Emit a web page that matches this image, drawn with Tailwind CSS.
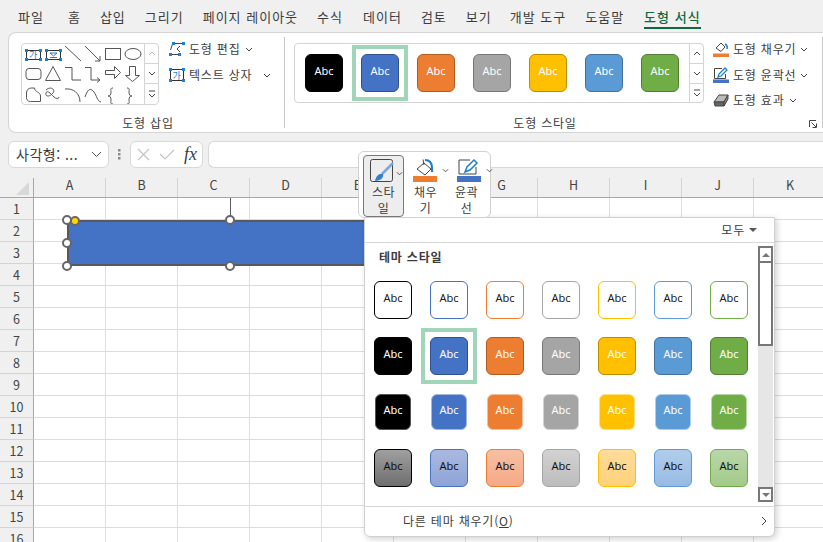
<!DOCTYPE html>
<html lang="ko">
<head>
  <meta charset="UTF-8">
  <title>도형 서식</title>
  <script src="https://cdn.jsdelivr.net/npm/@tailwindcss/browser@4"></script>
</head>
<body class="bg-[#f0f0f0]">
  <div class="relative flex h-[542px] w-[823px] flex-col overflow-hidden bg-[#f0f0f0] font-['Noto_Sans_CJK_KR',sans-serif] text-[#3c3c3c]">

    <!-- tabs -->
    <div class="flex h-[32px] shrink-0 items-start gap-[19px] pl-[18px] pt-[7px] text-[13px] leading-[20px] tracking-[1px]">
      <span>파일</span>
      <span class="ml-[5px]">홈</span>
      <span>삽입</span>
      <span>그리기</span>
      <span>페이지 레이아웃</span>
      <span>수식</span>
      <span class="ml-[1px]">데이터</span>
      <span>검토</span>
      <span>보기</span>
      <span class="-ml-[1px]">개발 도구</span>
      <span>도움말</span>
      <span class="relative ml-[1px] font-medium text-[#0e6a3c]">도형 서식<span class="absolute -bottom-[2px] left-0 right-0 h-[2px] bg-[#0e6a3c]"></span></span>
    </div>

    <!-- ribbon -->
    <div class="ml-[8px] flex h-[101px] shrink-0 rounded-l-lg border-y border-l border-[#d4d4d4] bg-white text-[12px] tracking-[0.8px]">
      <div class="flex w-[275px] flex-col">
        <div class="flex items-start pl-[12px] pt-[10px]">
          <div class="flex h-[62px] w-[138px] rounded border border-[#d4d4d4]">
            <svg class="h-[60px] w-[122px]" viewBox="22 45 122 60" fill="none" stroke="#555" stroke-width="1">
              <rect x="26.5" y="51.5" width="14" height="9" stroke="#333"/>
              <text x="33.5" y="59" font-size="9" fill="#1f7fc9" stroke="none" text-anchor="middle" font-family="Noto Sans CJK KR">가</text>
              <g fill="#1f7fc9" stroke="none"><rect x="25" y="50" width="3" height="3"/><rect x="39" y="50" width="3" height="3"/><rect x="25" y="59" width="3" height="3"/><rect x="39" y="59" width="3" height="3"/></g>
              <rect x="46.5" y="51.5" width="14" height="9" stroke="#333"/>
              <path d="M50 54h7l-3.500 3zM50 58.500h7" stroke="#1f7fc9"/>
              <g fill="#1f7fc9" stroke="none"><rect x="45" y="50" width="3" height="3"/><rect x="59" y="50" width="3" height="3"/><rect x="45" y="59" width="3" height="3"/><rect x="59" y="59" width="3" height="3"/></g>
              <path d="M65 47l16 15M85 47l15 15M95 62h5v-5"/>
              <rect x="105.500" y="49.500" width="15" height="11"/>
              <ellipse cx="133" cy="55" rx="8" ry="5.500"/>
              <rect x="26" y="69.500" width="15" height="11" rx="3"/>
              <path d="M53 67.500l7.500 14h-15zM65 68.500h7v12.500h9M85 68.500h6v12.500h8M97 78.500l3 2.500-3 2.500"/>
              <path d="M105.500 71.500h9v-4l6 6-6 6v-4h-9zM129.500 67.500h6v9h4l-7 6-7-6h4z"/>
              <path d="M26.500 94c0-3 2-5 5-5h3c0 4 6 4 6 8v5.500h-10c-3 0-4-2-4-4z"/>
              <path d="M46 91c4-4 10-1 7 3-3 4-8 4-7 0 1-4 6 2 8 4 2 2 5 2 5 0"/>
              <path d="M65 90c8-1 15 4 15 13M85 98c3-9 6-9 9-5 3 4 3 9 7 10"/>
              <path d="M113 90c-3 0-2 2-2 4 0 3-1 4-3 4 2 0 3 1 3 4 0 2-1 4 2 4M127 90c3 0 2 2 2 4 0 3 1 4 3 4-2 0-3 1-3 4 0 2 1 4-2 4" transform="translate(0 -1)"/>
            </svg>
            <div class="flex w-[14px] flex-col border-l border-[#d4d4d4] text-[#555]">
              <div class="flex h-[20px] items-center justify-center border-b border-[#d4d4d4]"><svg class="h-[5px] w-[8px]" viewBox="0 0 8 5" fill="none" stroke="#bbb"><path d="M1 4l3-3 3 3"/></svg></div>
              <div class="flex h-[20px] items-center justify-center border-b border-[#d4d4d4]"><svg class="h-[5px] w-[8px]" viewBox="0 0 8 5" fill="none" stroke="#444"><path d="M1 1l3 3 3-3"/></svg></div>
              <div class="flex flex-1 items-center justify-center"><svg class="h-[8px] w-[8px]" viewBox="0 0 8 8" fill="none" stroke="#444"><path d="M1 1h6M1 4l3 3 3-3"/></svg></div>
            </div>
          </div>
          <div class="-mt-[7px] ml-[10px] flex flex-col">
            <div class="flex h-[26px] items-center">
              <svg class="h-[14px] w-[16px]" viewBox="0 0 16 14" fill="none" stroke="#444"><path d="M5 1.500h9M1.500 8l2-6M1 12.500h9M11 4l-3 3 3 3"/><g fill="#1f7fc9" stroke="none"><rect x="3" y="0" width="3" height="3"/><rect x="13" y="0" width="3" height="3"/><rect x="0" y="11" width="3" height="3"/><rect x="9" y="11" width="3" height="3"/></g></svg>
              <span class="ml-[4px]">도형 편집</span>
              <svg class="ml-[4px] h-[5px] w-[8px]" viewBox="0 0 8 5" fill="none" stroke="#444"><path d="M1 1l3 3 3-3"/></svg>
            </div>
            <div class="flex h-[26px] items-center">
              <svg class="h-[14px] w-[16px]" viewBox="0 0 16 14" fill="none"><rect x="1.500" y="1.500" width="13" height="11" stroke="#333"/><text x="8" y="10.500" font-size="9" fill="#1f7fc9" text-anchor="middle" font-family="Noto Sans CJK KR">가</text><g fill="#1f7fc9"><rect x="0" y="0" width="3" height="3"/><rect x="13" y="0" width="3" height="3"/><rect x="0" y="11" width="3" height="3"/><rect x="13" y="11" width="3" height="3"/></g></svg>
              <span class="ml-[4px]">텍스트 상자</span>
              <svg class="ml-[11px] h-[5px] w-[8px]" viewBox="0 0 8 5" fill="none" stroke="#444"><path d="M1 1l3 3 3-3"/></svg>
            </div>
          </div>
        </div>
        <div class="mt-auto flex h-[21px] items-center justify-center pl-[3px] pt-[2px]">도형 삽입</div>
      </div>
      <div class="my-[4px] w-px bg-[#c8c8c8]"></div>

      <div class="flex w-[520px] flex-col">
        <div class="flex items-start pl-[9px] pt-[10px]">
          <div class="flex h-[60px] w-[410px] shrink-0 rounded border border-[#d4d4d4]">
            <div class="flex flex-1 items-center gap-[18px] pl-[10px] font-['Noto_Sans',sans-serif] text-[11px] tracking-normal text-white">
              <div class="flex h-[38px] w-[38px] items-center justify-center rounded-md border border-black bg-black pb-[3px]">Abc</div>
              <div class="-m-[9px] flex h-[56px] w-[56px] shrink-0 items-center justify-center border-4 border-[#a0d5b9]">
                <div class="flex h-[38px] w-[38px] items-center justify-center rounded-md border border-[#2f528f] bg-[#4472c4] pb-[3px]">Abc</div>
              </div>
              <div class="flex h-[38px] w-[38px] items-center justify-center rounded-md border border-[#ae5a21] bg-[#ed7d31] pb-[3px]">Abc</div>
              <div class="flex h-[38px] w-[38px] items-center justify-center rounded-md border border-[#787878] bg-[#a5a5a5] pb-[3px]">Abc</div>
              <div class="flex h-[38px] w-[38px] items-center justify-center rounded-md border border-[#bc8c00] bg-[#ffc000] pb-[3px]">Abc</div>
              <div class="flex h-[38px] w-[38px] items-center justify-center rounded-md border border-[#41719c] bg-[#5b9bd5] pb-[3px]">Abc</div>
              <div class="flex h-[38px] w-[38px] items-center justify-center rounded-md border border-[#507e32] bg-[#70ad47] pb-[3px]">Abc</div>
            </div>
            <div class="flex w-[14px] flex-col border-l border-[#d4d4d4]">
              <div class="flex h-[20px] items-center justify-center border-b border-[#d4d4d4]"><svg class="h-[5px] w-[8px]" viewBox="0 0 8 5" fill="none" stroke="#444"><path d="M1 4l3-3 3 3"/></svg></div>
              <div class="flex h-[20px] items-center justify-center border-b border-[#d4d4d4]"><svg class="h-[5px] w-[8px]" viewBox="0 0 8 5" fill="none" stroke="#444"><path d="M1 1l3 3 3-3"/></svg></div>
              <div class="flex flex-1 items-center justify-center"><svg class="h-[8px] w-[8px]" viewBox="0 0 8 8" fill="none" stroke="#444"><path d="M1 1h6M1 4l3 3 3-3"/></svg></div>
            </div>
          </div>
          <div class="-mt-[7px] ml-[9px] flex shrink-0 flex-col">
            <div class="flex h-[26px] items-center">
              <svg class="h-[16px] w-[16px]" viewBox="0 0 16 16" fill="none"><path d="M3 7l5-5 4 4-4 4.500z" stroke="#444"/><path d="M12 3c2 1 2.500 3 2 5" stroke="#1f7fc9" stroke-width="1.500"/><rect x="0" y="12.500" width="16" height="3.500" fill="#ed7d31"/></svg>
              <span class="ml-[4px] whitespace-nowrap">도형 채우기</span>
              <svg class="ml-[4px] h-[5px] w-[8px]" viewBox="0 0 8 5" fill="none" stroke="#444"><path d="M1 1l3 3 3-3"/></svg>
            </div>
            <div class="flex h-[26px] items-center">
              <svg class="h-[16px] w-[16px]" viewBox="0 0 16 16" fill="none"><path d="M9 1.500H1.500v10h11V7" stroke="#444"/><path d="M5 10l1-3 6-6 2 2-6 6z" fill="#fff" stroke="#1f7fc9" stroke-width="1.300"/><rect x="0" y="12.500" width="16" height="3.500" fill="#4472c4"/></svg>
              <span class="ml-[4px] whitespace-nowrap">도형 윤곽선</span>
              <svg class="ml-[4px] h-[5px] w-[8px]" viewBox="0 0 8 5" fill="none" stroke="#444"><path d="M1 1l3 3 3-3"/></svg>
            </div>
            <div class="flex h-[24px] items-center">
              <svg class="h-[14px] w-[16px]" viewBox="0 0 16 14"><path d="M1 9l5-7h9l-4 7z" fill="#bbb" stroke="#444"/><path d="M1 9h10v4H2z" fill="#666" stroke="#444"/><path d="M11 9l4-7v4l-4 7z" fill="#888" stroke="#444"/></svg>
              <span class="ml-[4px] whitespace-nowrap">도형 효과</span>
              <svg class="ml-[4px] h-[5px] w-[8px]" viewBox="0 0 8 5" fill="none" stroke="#444"><path d="M1 1l3 3 3-3"/></svg>
            </div>
          </div>
        </div>
        <div class="mt-auto flex h-[21px] items-center justify-center pt-[2px]">도형 스타일</div>
      </div>
      <div class="relative flex-1">
        <svg class="absolute left-[4px] bottom-[4px] h-[8px] w-[8px]" viewBox="0 0 8 8" fill="none" stroke="#444"><path d="M.5 7V.5H7M2.500 2.500l4.500 4.500M7.500 3.500v4h-4"/></svg>
      </div>
      <div class="my-[4px] w-px bg-[#c8c8c8]"></div>
    </div>

    <!-- formula bar -->
    <div class="ml-[8px] mt-[8px] flex h-[27px] shrink-0 items-stretch">
      <div class="flex w-[101px] items-center justify-between rounded-md border border-[#d8d8d8] bg-white pl-[7px] pr-[6px] text-[14px] tracking-[0.5px]">
        <span>사각형: ...</span>
        <svg class="h-[7px] w-[11px]" viewBox="0 0 11 7" fill="none" stroke="#555"><path d="M1 1l4.500 4.500L10 1"/></svg>
      </div>
      <div class="flex w-[21px] items-center justify-center text-[#8a8a8a]">
        <svg class="h-[11px] w-[3px]" viewBox="0 0 3 11" fill="#8a8a8a"><rect y="0" width="2.500" height="2.500"/><rect y="4" width="2.500" height="2.500"/><rect y="8" width="2.500" height="2.500"/></svg>
      </div>
      <div class="flex w-[73px] items-center rounded-md border border-[#d8d8d8] bg-white pl-[6px]">
        <svg class="h-[13px] w-[13px]" viewBox="0 0 13 13" fill="none" stroke="#c4c4c4" stroke-width="1.200"><path d="M1 1l11 11M12 1L1 12"/></svg>
        <svg class="ml-[9px] h-[11px] w-[16px]" viewBox="0 0 16 11" fill="none" stroke="#c4c4c4" stroke-width="1.200"><path d="M1 5l5 5L15 1"/></svg>
        <span class="ml-[9px] font-['Liberation_Serif',serif] text-[18px] italic text-[#3c3c3c]">fx</span>
      </div>
      <div class="ml-[5px] flex-1 rounded-l-md border-y border-l border-[#d8d8d8] bg-white"></div>
    </div>

    <!-- sheet -->
    <div class="mt-[10px] flex h-[20px] shrink-0 border-b border-[#a8a8a8] text-[12.500px] text-[#444]">
      <div class="relative w-[34px] shrink-0 border-r border-[#a8a8a8]">
        <div class="absolute bottom-[2px] right-[4px] h-0 w-0 border-b-[13px] border-l-[13px] border-b-[#d8d8d8] border-l-transparent"></div>
      </div>
      <div class="flex w-[72px] shrink-0 items-center justify-center border-r border-[#d4d4d4] pb-[4px]">A</div>
      <div class="flex w-[72px] shrink-0 items-center justify-center border-r border-[#d4d4d4] pb-[4px]">B</div>
      <div class="flex w-[72px] shrink-0 items-center justify-center border-r border-[#d4d4d4] pb-[4px]">C</div>
      <div class="flex w-[72px] shrink-0 items-center justify-center border-r border-[#d4d4d4] pb-[4px]">D</div>
      <div class="flex w-[72px] shrink-0 items-center justify-center border-r border-[#d4d4d4] pb-[4px]">E</div>
      <div class="w-[72px] shrink-0 border-r border-[#d4d4d4]"></div>
      <div class="flex w-[72px] shrink-0 items-center justify-center border-r border-[#d4d4d4] pb-[4px]">G</div>
      <div class="flex w-[72px] shrink-0 items-center justify-center border-r border-[#d4d4d4] pb-[4px]">H</div>
      <div class="flex w-[72px] shrink-0 items-center justify-center border-r border-[#d4d4d4] pb-[4px]">I</div>
      <div class="flex w-[72px] shrink-0 items-center justify-center border-r border-[#d4d4d4] pb-[4px]">J</div>
      <div class="flex w-[72px] shrink-0 items-center justify-center pb-[4px]">K</div>
    </div>
    <div class="flex shrink-0 flex-col bg-white text-[12.500px] text-[#444]">
      <div class="flex h-[22px]"><div class="flex w-[34px] shrink-0 items-center justify-center border-r border-b border-r-[#a8a8a8] border-b-[#d4d4d4] bg-[#f0f0f0] pt-[2px]">1</div><div class="flex-1 border-b border-[#dcdcdc] bg-[repeating-linear-gradient(90deg,transparent_0,transparent_71px,#dcdcdc_71px,#dcdcdc_72px)]"></div></div>
      <div class="flex h-[22px]"><div class="flex w-[34px] shrink-0 items-center justify-center border-r border-b border-r-[#a8a8a8] border-b-[#d4d4d4] bg-[#f0f0f0] pt-[2px]">2</div><div class="flex-1 border-b border-[#dcdcdc] bg-[repeating-linear-gradient(90deg,transparent_0,transparent_71px,#dcdcdc_71px,#dcdcdc_72px)]"></div></div>
      <div class="flex h-[22px]"><div class="flex w-[34px] shrink-0 items-center justify-center border-r border-b border-r-[#a8a8a8] border-b-[#d4d4d4] bg-[#f0f0f0] pt-[2px]">3</div><div class="flex-1 border-b border-[#dcdcdc] bg-[repeating-linear-gradient(90deg,transparent_0,transparent_71px,#dcdcdc_71px,#dcdcdc_72px)]"></div></div>
      <div class="flex h-[22px]"><div class="flex w-[34px] shrink-0 items-center justify-center border-r border-b border-r-[#a8a8a8] border-b-[#d4d4d4] bg-[#f0f0f0] pt-[2px]">4</div><div class="flex-1 border-b border-[#dcdcdc] bg-[repeating-linear-gradient(90deg,transparent_0,transparent_71px,#dcdcdc_71px,#dcdcdc_72px)]"></div></div>
      <div class="flex h-[22px]"><div class="flex w-[34px] shrink-0 items-center justify-center border-r border-b border-r-[#a8a8a8] border-b-[#d4d4d4] bg-[#f0f0f0] pt-[2px]">5</div><div class="flex-1 border-b border-[#dcdcdc] bg-[repeating-linear-gradient(90deg,transparent_0,transparent_71px,#dcdcdc_71px,#dcdcdc_72px)]"></div></div>
      <div class="flex h-[22px]"><div class="flex w-[34px] shrink-0 items-center justify-center border-r border-b border-r-[#a8a8a8] border-b-[#d4d4d4] bg-[#f0f0f0] pt-[2px]">6</div><div class="flex-1 border-b border-[#dcdcdc] bg-[repeating-linear-gradient(90deg,transparent_0,transparent_71px,#dcdcdc_71px,#dcdcdc_72px)]"></div></div>
      <div class="flex h-[22px]"><div class="flex w-[34px] shrink-0 items-center justify-center border-r border-b border-r-[#a8a8a8] border-b-[#d4d4d4] bg-[#f0f0f0] pt-[2px]">7</div><div class="flex-1 border-b border-[#dcdcdc] bg-[repeating-linear-gradient(90deg,transparent_0,transparent_71px,#dcdcdc_71px,#dcdcdc_72px)]"></div></div>
      <div class="flex h-[22px]"><div class="flex w-[34px] shrink-0 items-center justify-center border-r border-b border-r-[#a8a8a8] border-b-[#d4d4d4] bg-[#f0f0f0] pt-[2px]">8</div><div class="flex-1 border-b border-[#dcdcdc] bg-[repeating-linear-gradient(90deg,transparent_0,transparent_71px,#dcdcdc_71px,#dcdcdc_72px)]"></div></div>
      <div class="flex h-[22px]"><div class="flex w-[34px] shrink-0 items-center justify-center border-r border-b border-r-[#a8a8a8] border-b-[#d4d4d4] bg-[#f0f0f0] pt-[2px]">9</div><div class="flex-1 border-b border-[#dcdcdc] bg-[repeating-linear-gradient(90deg,transparent_0,transparent_71px,#dcdcdc_71px,#dcdcdc_72px)]"></div></div>
      <div class="flex h-[22px]"><div class="flex w-[34px] shrink-0 items-center justify-center border-r border-b border-r-[#a8a8a8] border-b-[#d4d4d4] bg-[#f0f0f0] pt-[2px]">10</div><div class="flex-1 border-b border-[#dcdcdc] bg-[repeating-linear-gradient(90deg,transparent_0,transparent_71px,#dcdcdc_71px,#dcdcdc_72px)]"></div></div>
      <div class="flex h-[22px]"><div class="flex w-[34px] shrink-0 items-center justify-center border-r border-b border-r-[#a8a8a8] border-b-[#d4d4d4] bg-[#f0f0f0] pt-[2px]">11</div><div class="flex-1 border-b border-[#dcdcdc] bg-[repeating-linear-gradient(90deg,transparent_0,transparent_71px,#dcdcdc_71px,#dcdcdc_72px)]"></div></div>
      <div class="flex h-[22px]"><div class="flex w-[34px] shrink-0 items-center justify-center border-r border-b border-r-[#a8a8a8] border-b-[#d4d4d4] bg-[#f0f0f0] pt-[2px]">12</div><div class="flex-1 border-b border-[#dcdcdc] bg-[repeating-linear-gradient(90deg,transparent_0,transparent_71px,#dcdcdc_71px,#dcdcdc_72px)]"></div></div>
      <div class="flex h-[22px]"><div class="flex w-[34px] shrink-0 items-center justify-center border-r border-b border-r-[#a8a8a8] border-b-[#d4d4d4] bg-[#f0f0f0] pt-[2px]">13</div><div class="flex-1 border-b border-[#dcdcdc] bg-[repeating-linear-gradient(90deg,transparent_0,transparent_71px,#dcdcdc_71px,#dcdcdc_72px)]"></div></div>
      <div class="flex h-[22px]"><div class="flex w-[34px] shrink-0 items-center justify-center border-r border-b border-r-[#a8a8a8] border-b-[#d4d4d4] bg-[#f0f0f0] pt-[2px]">14</div><div class="flex-1 border-b border-[#dcdcdc] bg-[repeating-linear-gradient(90deg,transparent_0,transparent_71px,#dcdcdc_71px,#dcdcdc_72px)]"></div></div>
      <div class="flex h-[22px]"><div class="flex w-[34px] shrink-0 items-center justify-center border-r border-b border-r-[#a8a8a8] border-b-[#d4d4d4] bg-[#f0f0f0] pt-[2px]">15</div><div class="flex-1 border-b border-[#dcdcdc] bg-[repeating-linear-gradient(90deg,transparent_0,transparent_71px,#dcdcdc_71px,#dcdcdc_72px)]"></div></div>
      <div class="flex h-[22px]"><div class="flex w-[34px] shrink-0 items-center justify-center border-r border-b border-r-[#a8a8a8] border-b-[#d4d4d4] bg-[#f0f0f0] pt-[2px]">16</div><div class="flex-1 border-b border-[#dcdcdc] bg-[repeating-linear-gradient(90deg,transparent_0,transparent_71px,#dcdcdc_71px,#dcdcdc_72px)]"></div></div>
    </div>

    <!-- selected shape on the sheet -->
    <div class="absolute left-[67px] top-[220px] h-[46px] w-[320px] border-2 border-[#595959] bg-[#4472c4]"></div>
    <div class="absolute left-[230px] top-[198px] h-[22px] w-px bg-[#595959]"></div>
    <div class="absolute left-[62px] top-[215px] h-[10px] w-[10px] rounded-full border-2 border-[#666] bg-white"></div>
    <div class="absolute left-[62px] top-[238px] h-[10px] w-[10px] rounded-full border-2 border-[#666] bg-white"></div>
    <div class="absolute left-[62px] top-[261px] h-[10px] w-[10px] rounded-full border-2 border-[#666] bg-white"></div>
    <div class="absolute left-[225px] top-[215px] h-[10px] w-[10px] rounded-full border-2 border-[#666] bg-white"></div>
    <div class="absolute left-[225px] top-[261px] h-[10px] w-[10px] rounded-full border-2 border-[#666] bg-white"></div>
    <div class="absolute left-[70px] top-[216px] h-[10px] w-[10px] rounded-full border-2 border-[#666] bg-[#ffd800]"></div>

    <!-- style popup -->
    <div class="absolute left-[364px] top-[217px] flex h-[320px] w-[411px] flex-col rounded-b-md border border-[#d0d0d0] bg-white shadow-[2px_2px_6px_rgba(0,0,0,0.18)]">
      <div class="flex h-[25px] shrink-0 items-center justify-end gap-[4px] border-b border-[#d8d8d8] pr-[17px] text-[12px] tracking-[0.8px]">
        <span>모두</span>
        <span class="h-0 w-0 border-x-[4px] border-t-[4px] border-x-transparent border-t-[#555]"></span>
      </div>
      <div class="flex h-[263px] shrink-0">
        <div class="flex-1">
          <div class="flex h-[28px] items-center pl-[14px] text-[12px] font-bold tracking-[0.8px]">테마 스타일</div>
          <div class="mt-[10px] grid grid-cols-[repeat(7,56px)] auto-rows-[38px] gap-y-[18px] font-['Noto_Sans',sans-serif] text-[11px] place-items-center">
            <div class="flex h-[38px] w-[38px] items-center justify-center rounded-md border border-black bg-white pb-[3px] text-[#222]">Abc</div>
            <div class="flex h-[38px] w-[38px] items-center justify-center rounded-md border border-[#4472c4] bg-white pb-[3px] text-[#222]">Abc</div>
            <div class="flex h-[38px] w-[38px] items-center justify-center rounded-md border border-[#ed7d31] bg-white pb-[3px] text-[#222]">Abc</div>
            <div class="flex h-[38px] w-[38px] items-center justify-center rounded-md border border-[#a5a5a5] bg-white pb-[3px] text-[#222]">Abc</div>
            <div class="flex h-[38px] w-[38px] items-center justify-center rounded-md border border-[#ffc000] bg-white pb-[3px] text-[#222]">Abc</div>
            <div class="flex h-[38px] w-[38px] items-center justify-center rounded-md border border-[#5b9bd5] bg-white pb-[3px] text-[#222]">Abc</div>
            <div class="flex h-[38px] w-[38px] items-center justify-center rounded-md border border-[#70ad47] bg-white pb-[3px] text-[#222]">Abc</div>

            <div class="flex h-[38px] w-[38px] items-center justify-center rounded-md border border-black bg-black pb-[3px] text-white">Abc</div>
            <div class="-m-[9px] flex h-[56px] w-[56px] items-center justify-center border-4 border-[#a0d5b9]">
              <div class="flex h-[38px] w-[38px] items-center justify-center rounded-md border border-[#2f528f] bg-[#4472c4] pb-[3px] text-white">Abc</div>
            </div>
            <div class="flex h-[38px] w-[38px] items-center justify-center rounded-md border border-[#ae5a21] bg-[#ed7d31] pb-[3px] text-white">Abc</div>
            <div class="flex h-[38px] w-[38px] items-center justify-center rounded-md border border-[#787878] bg-[#a5a5a5] pb-[3px] text-white">Abc</div>
            <div class="flex h-[38px] w-[38px] items-center justify-center rounded-md border border-[#bc8c00] bg-[#ffc000] pb-[3px] text-white">Abc</div>
            <div class="flex h-[38px] w-[38px] items-center justify-center rounded-md border border-[#41719c] bg-[#5b9bd5] pb-[3px] text-white">Abc</div>
            <div class="flex h-[38px] w-[38px] items-center justify-center rounded-md border border-[#507e32] bg-[#70ad47] pb-[3px] text-white">Abc</div>

            <div class="flex h-[36px] w-[36px] items-center justify-center rounded-md border border-[#555] bg-black pb-[3px] text-white">Abc</div>
            <div class="flex h-[36px] w-[36px] items-center justify-center rounded-md border border-[#a3b8e1] bg-[#4472c4] pb-[3px] text-white">Abc</div>
            <div class="flex h-[36px] w-[36px] items-center justify-center rounded-md border border-[#f6bd98] bg-[#ed7d31] pb-[3px] text-white">Abc</div>
            <div class="flex h-[36px] w-[36px] items-center justify-center rounded-md border border-[#d2d2d2] bg-[#a5a5a5] pb-[3px] text-white">Abc</div>
            <div class="flex h-[36px] w-[36px] items-center justify-center rounded-md border border-[#ffdf80] bg-[#ffc000] pb-[3px] text-white">Abc</div>
            <div class="flex h-[36px] w-[36px] items-center justify-center rounded-md border border-[#adcdea] bg-[#5b9bd5] pb-[3px] text-white">Abc</div>
            <div class="flex h-[36px] w-[36px] items-center justify-center rounded-md border border-[#b7d6a3] bg-[#70ad47] pb-[3px] text-white">Abc</div>

            <div class="flex h-[38px] w-[38px] items-center justify-center rounded-md border border-black bg-gradient-to-b from-[#a0a0a0] to-[#6e6e6e] pb-[3px] text-[#111]">Abc</div>
            <div class="flex h-[38px] w-[38px] items-center justify-center rounded-md border border-[#4472c4] bg-gradient-to-b from-[#a9b9e1] to-[#8ea4d6] pb-[3px] text-[#111]">Abc</div>
            <div class="flex h-[38px] w-[38px] items-center justify-center rounded-md border border-[#ed7d31] bg-gradient-to-b from-[#f7bfa3] to-[#f5a986] pb-[3px] text-[#111]">Abc</div>
            <div class="flex h-[38px] w-[38px] items-center justify-center rounded-md border border-[#a5a5a5] bg-gradient-to-b from-[#d2d2d2] to-[#bcbcbc] pb-[3px] text-[#111]">Abc</div>
            <div class="flex h-[38px] w-[38px] items-center justify-center rounded-md border border-[#ffc000] bg-gradient-to-b from-[#ffdc9a] to-[#ffd27a] pb-[3px] text-[#111]">Abc</div>
            <div class="flex h-[38px] w-[38px] items-center justify-center rounded-md border border-[#5b9bd5] bg-gradient-to-b from-[#b1cdec] to-[#98bbe3] pb-[3px] text-[#111]">Abc</div>
            <div class="flex h-[38px] w-[38px] items-center justify-center rounded-md border border-[#70ad47] bg-gradient-to-b from-[#b9d7a8] to-[#a3ca8a] pb-[3px] text-[#111]">Abc</div>
          </div>
        </div>
        <div class="mr-[1px] mt-[3px] flex h-[256px] w-[15px] flex-col bg-[#e6e6e6]">
          <div class="flex h-[15px] items-center justify-center border-2 border-b-0 border-[#777] bg-white"><span class="h-0 w-0 border-x-[4px] border-b-[4px] border-x-transparent border-b-[#777]"></span></div>
          <div class="h-[85px] border-2 border-[#777] bg-white"></div>
          <div class="mt-auto flex h-[15px] items-center justify-center border-2 border-[#777] bg-white"><span class="h-0 w-0 border-x-[4px] border-t-[4px] border-x-transparent border-t-[#777]"></span></div>
        </div>
      </div>
      <div class="flex flex-1 items-center justify-between border-t border-[#d8d8d8] pb-[2px] pl-[38px] pr-[7px] text-[12px] tracking-[0.8px]">
        <span>다른 테마 채우기(<span class="underline">O</span>)</span>
        <svg class="h-[10px] w-[6px]" viewBox="0 0 6 10" fill="none" stroke="#444"><path d="M1 1l4 4-4 4"/></svg>
      </div>
    </div>

    <!-- mini toolbar -->
    <div class="absolute left-[358px] top-[151px] flex h-[67px] w-[133px] gap-[4px] rounded-md border border-[#d0d0d0] bg-white pl-[4px] pt-[3px] text-[12px] leading-[16px]">
      <div class="relative flex h-[62px] w-[41px] flex-col items-center rounded border border-[#777] bg-[#ededed] pt-[3px]">
        <svg class="mr-[3px] h-[23px] w-[24px] shrink-0" viewBox="0 0 24 23" fill="none"><rect x=".5" y=".5" width="22" height="22" rx="2" stroke="#444"/><path d="M23 4L12 15" stroke="#7aa7d8" stroke-width="2.500"/><path d="M5 22c1-5 4-8 8-7 1 3-2 7-8 7z" fill="#2f7fd0"/></svg>
        <svg class="absolute right-[0px] top-[15px] h-[5px] w-[7px]" viewBox="0 0 8 5" fill="none" stroke="#444"><path d="M1 1l3 3 3-3"/></svg>
        <span class="mt-[2px] text-center tracking-[0.5px]">스타<br>일</span>
      </div>
      <div class="relative flex h-[62px] w-[37px] flex-col items-center pt-[3px]">
        <svg class="mr-[3px] h-[24px] w-[24px] shrink-0" viewBox="0 0 24 24" fill="none"><path d="M4 11l7-6 7 6-6 6z" stroke="#444"/><path d="M10 1.500l1 5.500" stroke="#444"/><path d="M12 2c5 0 7 3 7 8v4" stroke="#1f7fc9" stroke-width="2.200"/><rect x="0" y="18" width="24" height="6" fill="#ed7d31"/></svg>
        <svg class="absolute right-[-4px] top-[13px] h-[5px] w-[7px]" viewBox="0 0 8 5" fill="none" stroke="#444"><path d="M1 1l3 3 3-3"/></svg>
        <span class="mr-[2px] mt-[2px] text-center tracking-[0.5px]">채우<br>기</span>
      </div>
      <div class="relative ml-[3px] flex h-[62px] w-[37px] flex-col items-center pt-[3px]">
        <svg class="mr-[3px] h-[24px] w-[24px] shrink-0" viewBox="0 0 24 24" fill="none"><path d="M13 2H2v14h17V9" stroke="#444"/><path d="M8 14l2-5 7-7 3 3-7 7z" fill="#fff" stroke="#1f7fc9" stroke-width="1.500"/><rect x="0" y="18" width="24" height="6" fill="#4472c4"/></svg>
        <svg class="absolute right-[-4px] top-[13px] h-[5px] w-[7px]" viewBox="0 0 8 5" fill="none" stroke="#444"><path d="M1 1l3 3 3-3"/></svg>
        <span class="mr-[8px] mt-[2px] text-center tracking-[0.5px]">윤곽<br>선</span>
      </div>
    </div>
  </div>
</body>
</html>
